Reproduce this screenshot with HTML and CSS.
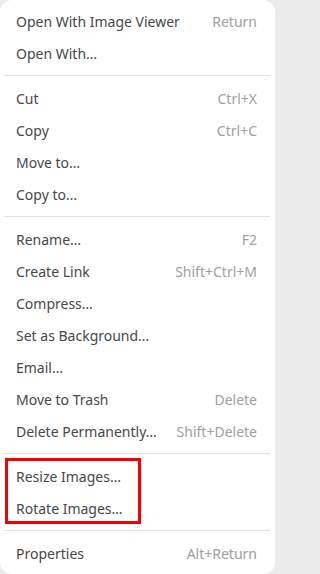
FILE: index.html
```html
<!DOCTYPE html>
<html lang="en">
<head>
<meta charset="utf-8">
<title>Context menu</title>
<link rel="stylesheet" href="styles.css">
</head>
<body>
<div class="menu">
  <div class="section">
    <div class="item"><span class="label">Open With Image Viewer</span><span class="accel">Return</span></div>
    <div class="item"><span class="label">Open With…</span></div>
  </div>
  <div class="sep"></div>
  <div class="section">
    <div class="item"><span class="label">Cut</span><span class="accel">Ctrl+X</span></div>
    <div class="item"><span class="label">Copy</span><span class="accel">Ctrl+C</span></div>
    <div class="item"><span class="label">Move to…</span></div>
    <div class="item"><span class="label">Copy to…</span></div>
  </div>
  <div class="sep"></div>
  <div class="section">
    <div class="item"><span class="label">Rename…</span><span class="accel">F2</span></div>
    <div class="item"><span class="label">Create Link</span><span class="accel">Shift+Ctrl+M</span></div>
    <div class="item"><span class="label">Compress…</span></div>
    <div class="item"><span class="label">Set as Background…</span></div>
    <div class="item"><span class="label">Email…</span></div>
    <div class="item"><span class="label">Move to Trash</span><span class="accel">Delete</span></div>
    <div class="item"><span class="label">Delete Permanently…</span><span class="accel">Shift+Delete</span></div>
  </div>
  <div class="sep"></div>
  <div class="section highlighted">
    <div class="item"><span class="label">Resize Images…</span></div>
    <div class="item"><span class="label">Rotate Images…</span></div>
    <div class="mark"></div>
  </div>
  <div class="sep"></div>
  <div class="section">
    <div class="item"><span class="label">Properties</span><span class="accel">Alt+Return</span></div>
  </div>
</div>
</body>
</html>
```

FILE: styles.css
```css
html, body {
  margin: 0;
  padding: 0;
  background: #ececec;
}
body {
  width: 275px;
  height: 574px;
  overflow: hidden;
}
.menu {
  box-sizing: border-box;
  width: 275px;
  height: 574px;
  background: #ffffff;
  border-radius: 12px;
  padding: 5px 0 4px 0;
  display: flex;
  flex-direction: column;
  font-family: "Noto Sans", "DejaVu Sans", sans-serif;
  font-size: 14px;
  color: #474747;
}
.section {
  display: flex;
  flex-direction: column;
}
.highlighted {
  position: relative;
}
.item {
  height: 32px;
  display: flex;
  align-items: center;
  justify-content: space-between;
  padding: 0 18px 0 16px;
}
.accel {
  color: #a0a0a0;
}
.sep {
  height: 1px;
  background: #e3e3e3;
  margin: 6px 5px 6px 4px;
}
.mark {
  position: absolute;
  left: 5px;
  top: -2px;
  width: 136px;
  height: 66px;
  box-sizing: border-box;
  border: 3px solid #f50000;
  pointer-events: none;
}
```
